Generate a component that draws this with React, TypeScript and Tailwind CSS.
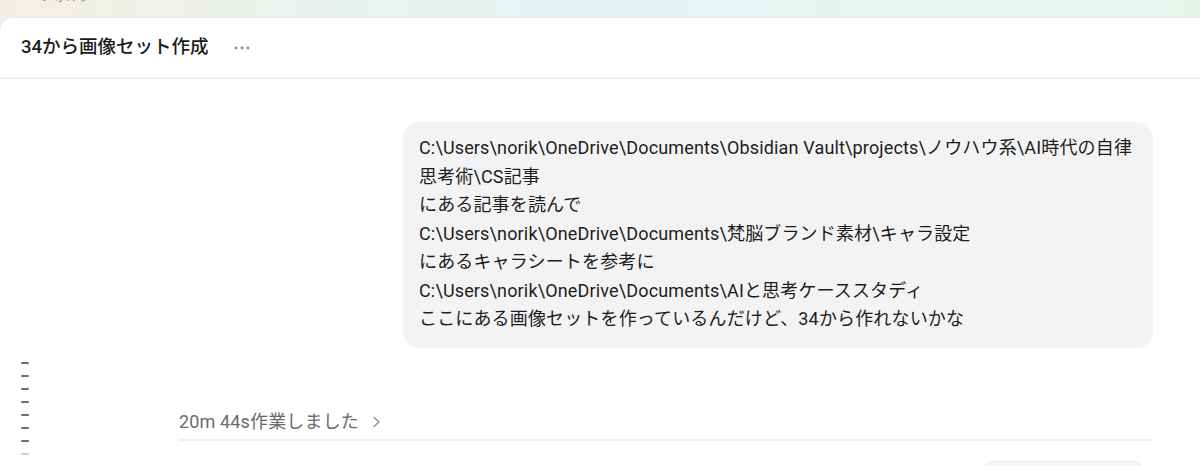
const font = "font-['Roboto','Noto_Sans_CJK_JP',sans-serif]";

const lines = [
  "C:\\Users\\norik\\OneDrive\\Documents\\Obsidian Vault\\projects\\ノウハウ系\\AI時代の自律思考術\\CS記事",
  "にある記事を読んで",
  "C:\\Users\\norik\\OneDrive\\Documents\\梵脳ブランド素材\\キャラ設定",
  "にあるキャラシートを参考に",
  "C:\\Users\\norik\\OneDrive\\Documents\\AIと思考ケーススタディ",
  "ここにある画像セットを作っているんだけど、34から作れないかな",
];

function TurnMarks() {
  // scroll position markers for each turn, drawn over the left edge
  return (
    <div className="absolute left-[21px] top-[344px] flex flex-col gap-[11px]">
      {[0, 1, 2, 3, 4, 5, 6].map((i) => (
        <span key={i} className="block h-[2px] w-[8px] rounded-full bg-[#6e6e6e]" />
      ))}
      <span className="block h-[2px] w-[8px] rounded-full bg-[#cfcfcf]" />
    </div>
  );
}

export default function App() {
  return (
    <div
      className={`${font} relative h-[466px] w-[1200px] overflow-hidden bg-gradient-to-r from-[#f3efe6] via-[#e3f4f4] to-[#e6f5ec]`}
    >
      <div className="h-[17px] overflow-hidden pl-[40px]">
        <span className="-mt-[12px] block text-[13px] leading-[16px] text-[#8a8a8a]">フォルダ</span>
      </div>

      <div className="relative flex h-[449px] flex-col rounded-tl-[14px] border-t border-[#e4ebe8] bg-white">
        <div className="flex h-[61px] shrink-0 items-center gap-[24px] border-b-2 border-[#efefef] px-[21px]">
          <h1 className="text-[18.5px] font-medium text-[#1b1b1b]">34から画像セット作成</h1>
          <svg width="18" height="6" viewBox="0 0 18 6" aria-hidden="true" className="mt-[1px]">
            <circle cx="3" cy="3" r="1.4" fill="#8a8a8a" />
            <circle cx="9" cy="3" r="1.4" fill="#8a8a8a" />
            <circle cx="15" cy="3" r="1.4" fill="#8a8a8a" />
          </svg>
        </div>

        <div className="flex flex-col pl-[179px] pr-[47px]">
          <div className="flex justify-end pt-[43px]">
            <div className="max-w-[750px] rounded-[16px] bg-[#f3f3f3] pb-[14px] pl-[16px] pr-[14px] pt-[12px] text-[18px] leading-[28.5px] tracking-[0.15px] text-[#1d1d1d]">
              {lines.map((l, i) => (
                <p key={i}>{l}</p>
              ))}
            </div>
          </div>

          <div className="mt-[62px] flex items-center gap-[12px] border-b-2 border-[#f0f0f0] pb-[5px] text-[18px] leading-[24px] tracking-[0.15px] text-[#6a6a6a]">
            <span>20m 44s作業しました</span>
            <svg width="10" height="14" viewBox="0 0 10 14" fill="none" stroke="#8a8a8a" strokeWidth="1.3" aria-hidden="true">
              <path d="M3 2.5l5 4.5-5 4.5" strokeLinecap="round" strokeLinejoin="round" />
            </svg>
          </div>

          <div className="mt-[20px] flex justify-end pr-[10px]">
            <div className="h-[20px] w-[160px] rounded-t-[10px] border-t border-[#ececec] bg-[#f6f6f6]" />
          </div>
        </div>

        <TurnMarks />
      </div>
    </div>
  );
}
